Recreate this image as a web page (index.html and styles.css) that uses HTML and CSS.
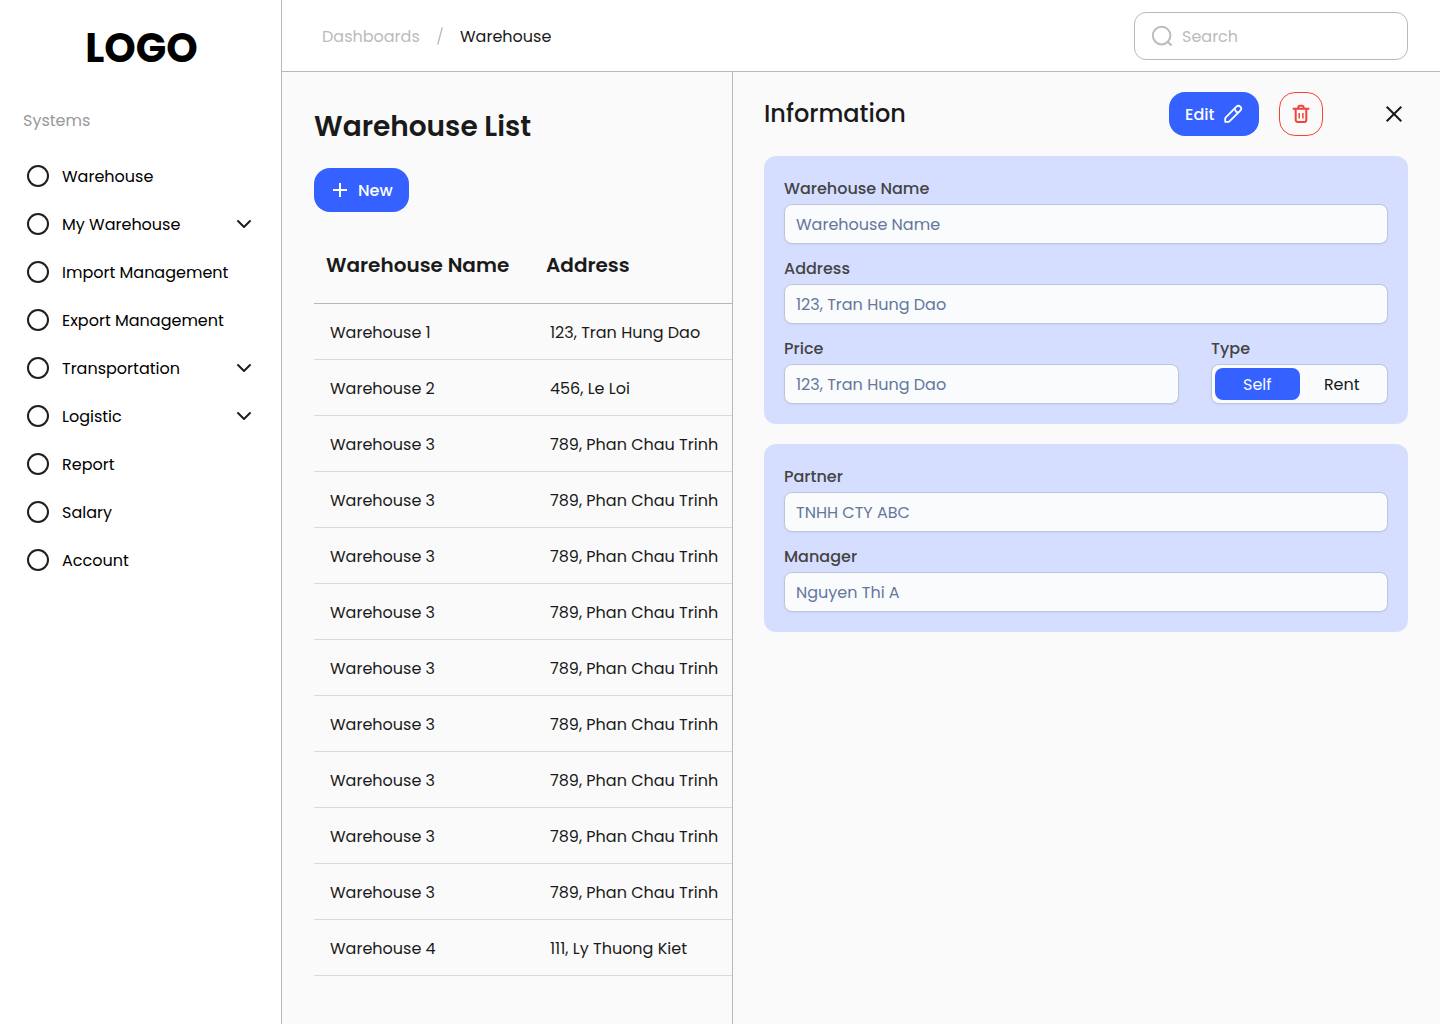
FILE: index.html
```html
<!DOCTYPE html>
<html lang="en">
<head>
<meta charset="utf-8">
<title>Warehouse</title>
<link rel="stylesheet" href="styles.css">
</head>
<body>
<div class="app">
  <aside class="sidebar">
    <div class="logo">LOGO</div>
    <div class="section-label">Systems</div>
    <nav class="menu">
      <a class="item"><i class="ring"></i><span>Warehouse</span></a>
      <a class="item"><i class="ring"></i><span>My Warehouse</span><svg class="chevron" viewBox="0 0 16 10"><path d="M2 2l6 6 6-6"/></svg></a>
      <a class="item"><i class="ring"></i><span>Import Management</span></a>
      <a class="item"><i class="ring"></i><span>Export Management</span></a>
      <a class="item"><i class="ring"></i><span>Transportation</span><svg class="chevron" viewBox="0 0 16 10"><path d="M2 2l6 6 6-6"/></svg></a>
      <a class="item"><i class="ring"></i><span>Logistic</span><svg class="chevron" viewBox="0 0 16 10"><path d="M2 2l6 6 6-6"/></svg></a>
      <a class="item"><i class="ring"></i><span>Report</span></a>
      <a class="item"><i class="ring"></i><span>Salary</span></a>
      <a class="item"><i class="ring"></i><span>Account</span></a>
    </nav>
  </aside>
  <div class="main">
    <header class="topbar">
      <div class="crumbs">
        <span class="crumb-parent">Dashboards</span>
        <svg class="slash" viewBox="0 0 6 18"><path d="M5.3.4L.7 17.6"/></svg>
        <span class="crumb-current">Warehouse</span>
      </div>
      <div class="search">
        <svg class="search-icon" viewBox="0 0 22 22"><circle cx="10.600" cy="10.600" r="8.800"/><path d="M16.500 16.500l4 4"/></svg>
        <span>Search</span>
      </div>
    </header>
    <div class="content">
      <section class="list">
        <h1>Warehouse List</h1>
        <button class="btn new"><svg class="plus" viewBox="0 0 14 14"><path d="M7 0v14M0 7h14"/></svg><span>New</span></button>
        <div class="table">
          <div class="row head"><span>Warehouse Name</span><span>Address</span></div>
          <div class="row"><span>Warehouse 1</span><span>123, Tran Hung Dao</span></div>
          <div class="row"><span>Warehouse 2</span><span>456, Le Loi</span></div>
          <div class="row"><span>Warehouse 3</span><span>789, Phan Chau Trinh</span></div>
          <div class="row"><span>Warehouse 3</span><span>789, Phan Chau Trinh</span></div>
          <div class="row"><span>Warehouse 3</span><span>789, Phan Chau Trinh</span></div>
          <div class="row"><span>Warehouse 3</span><span>789, Phan Chau Trinh</span></div>
          <div class="row"><span>Warehouse 3</span><span>789, Phan Chau Trinh</span></div>
          <div class="row"><span>Warehouse 3</span><span>789, Phan Chau Trinh</span></div>
          <div class="row"><span>Warehouse 3</span><span>789, Phan Chau Trinh</span></div>
          <div class="row"><span>Warehouse 3</span><span>789, Phan Chau Trinh</span></div>
          <div class="row"><span>Warehouse 3</span><span>789, Phan Chau Trinh</span></div>
          <div class="row"><span>Warehouse 4</span><span>111, Ly Thuong Kiet</span></div>
        </div>
      </section>
      <section class="detail">
        <div class="detail-head">
          <h2>Information</h2>
          <button class="btn edit"><span>Edit</span><svg class="pencil" viewBox="0 0 20 20"><path d="M2.200 17.800v-3.200q0-.6.400-1L13.400 2.700a2.500 2.500 0 0 1 3.900 3.900L6.400 17.400q-.4.400-1 .4z"/><path d="M11.500 4.800l1.700 3.100 2.200.600"/></svg></button>
          <button class="btn delete"><svg class="trash" viewBox="0 0 18 20"><path d="M.7 4.700h16.600M3.700 4.700V16a2 2 0 0 0 2 2h6.600a2 2 0 0 0 2-2V4.700M6.300 4.700V3.500a1.800 1.800 0 0 1 1.800-1.800h1.800a1.800 1.800 0 0 1 1.800 1.800v1.200"/><path class="thin" d="M7.200 9v5.500M10.900 9v5.500"/></svg></button>
          <svg class="close" viewBox="0 0 18 18"><path d="M1.700 1.700l14.600 14.600M16.300 1.700L1.700 16.300"/></svg>
        </div>
        <div class="card">
          <div class="field"><label>Warehouse Name</label><div class="input"><span>Warehouse Name</span></div></div>
          <div class="field"><label>Address</label><div class="input"><span>123, Tran Hung Dao</span></div></div>
          <div class="split">
            <div class="field"><label>Price</label><div class="input"><span>123, Tran Hung Dao</span></div></div>
            <div class="field"><label>Type</label><div class="toggle"><span class="active">Self</span><span>Rent</span></div></div>
          </div>
        </div>
        <div class="card">
          <div class="field"><label>Partner</label><div class="input"><span>TNHH CTY ABC</span></div></div>
          <div class="field"><label>Manager</label><div class="input"><span>Nguyen Thi A</span></div></div>
        </div>
      </section>
    </div>
  </div>
</div>
</body>
</html>
```
FILE: styles.css
```css
* { box-sizing: border-box; }
body {
  margin: 0;
  font-family: Poppins, Inter, sans-serif;
  font-size: 16px;
  line-height: 24px;
  color: #1a1a1a;
  background: #fff;
}
svg { fill: none; stroke: currentColor; stroke-width: 2; flex: none; display: block; }
h1, h2 { margin: 0; }
.app { display: flex; width: 1440px; height: 1024px; overflow: hidden; }

/* optical centring of Poppins text in its rows */
.item span, .crumbs span, .search span, .btn span, .row span, .input span { padding-top: 2px; }

.sidebar { width: 282px; flex: none; border-right: 1px solid #b8b8b8; background: #fff; color: #000; }
.logo { padding: 18px 0 0 2px; height: 109px; font-size: 40px; font-weight: 700; line-height: 61px; text-align: center; }
.section-label { padding-left: 23px; color: #999; }
.menu { padding-top: 19px; }
.item { display: flex; align-items: center; height: 48px; padding: 0 29px 0 27px; gap: 13px; }
.ring { width: 22px; height: 22px; border: 2px solid #1f1f1f; border-radius: 50%; }
.chevron { width: 16px; height: 10px; margin-left: auto; color: #1f1f1f; stroke-linecap: round; stroke-linejoin: round; }

.main { flex: 1; display: flex; flex-direction: column; min-width: 0; }
.topbar { display: flex; justify-content: space-between; align-items: center; height: 72px; flex: none; padding: 0 32px 0 40px; border-bottom: 1px solid #b8b8b8; }
.crumbs { display: flex; align-items: center; }
.crumb-parent { width: 115px; color: #bbb; }
.slash { width: 6px; height: 18px; margin-right: 17px; stroke: #bbb; stroke-width: 1.4; }
.search { display: flex; align-items: center; gap: 9px; width: 274px; height: 48px; padding-left: 16px; border: 1px solid #b8b8b8; border-radius: 12px; color: #bbb; }
.search-icon { width: 22px; height: 22px; }

.content { flex: 1; display: flex; background: #fafafa; }
.list { width: 451px; flex: none; padding: 33px 0 0 32px; border-right: 1px solid #b8b8b8; }
h1 { font-size: 28px; font-weight: 600; line-height: 44px; }
.btn { display: flex; align-items: center; height: 44px; padding: 0; border: 0; border-radius: 16px; background: #3461ff; color: #fff; font: inherit; font-weight: 500; }
.new { width: 95px; margin-top: 19px; padding-left: 19px; gap: 11px; }
.plus { width: 14px; height: 14px; }
.table { margin-top: 16px; }
.row { display: flex; align-items: center; height: 56px; padding-left: 16px; border-bottom: 1px solid #d9d9d9; white-space: nowrap; }
.row span:first-child { width: 220px; flex: none; }
.head { height: 76px; padding-left: 12px; border-color: #b8b8b8; font-size: 20px; font-weight: 600; }
.head span { padding: 0 0 2px; }

.detail { flex: 1; padding: 20px 32px 0 31px; }
.detail-head { display: flex; align-items: center; height: 44px; margin-bottom: 20px; }
h2 { flex: 1; font-size: 24px; font-weight: 500; }
.edit { width: 90px; padding-left: 16px; gap: 9px; }
.pencil { width: 20px; height: 20px; stroke-width: 1.8; stroke-linejoin: round; }
.delete { width: 44px; margin: 0 62px 0 20px; justify-content: center; border: 1px solid #f44336; background: transparent; color: #f44336; }
.trash { width: 18px; height: 20px; }
.thin { stroke-width: 1.5; }
.close { width: 18px; height: 18px; margin-right: 5px; }
.card { display: flex; flex-direction: column; gap: 12px; padding: 20px; margin-bottom: 20px; border-radius: 12px; background: #d6deff; }
.field { display: flex; flex-direction: column; gap: 4px; }
label { height: 24px; padding-top: 1px; font-weight: 500; color: #444; }
.input, .toggle { display: flex; align-items: center; height: 40px; border: 1px solid #bfc6d9; border-radius: 8px; background: #f9fbfd; box-shadow: 0 1px 2px rgba(16, 24, 40, 0.06); }
.input { padding-left: 11px; color: #64779c; }
.split { display: grid; grid-template-columns: 395px 177px; justify-content: space-between; }
.toggle { padding: 3px; }
.toggle span { flex: 1; height: 32px; padding-top: 1px; line-height: 32px; text-align: center; border-radius: 8px; }
.toggle .active { background: #3461ff; color: #f9fbfd; }
```
